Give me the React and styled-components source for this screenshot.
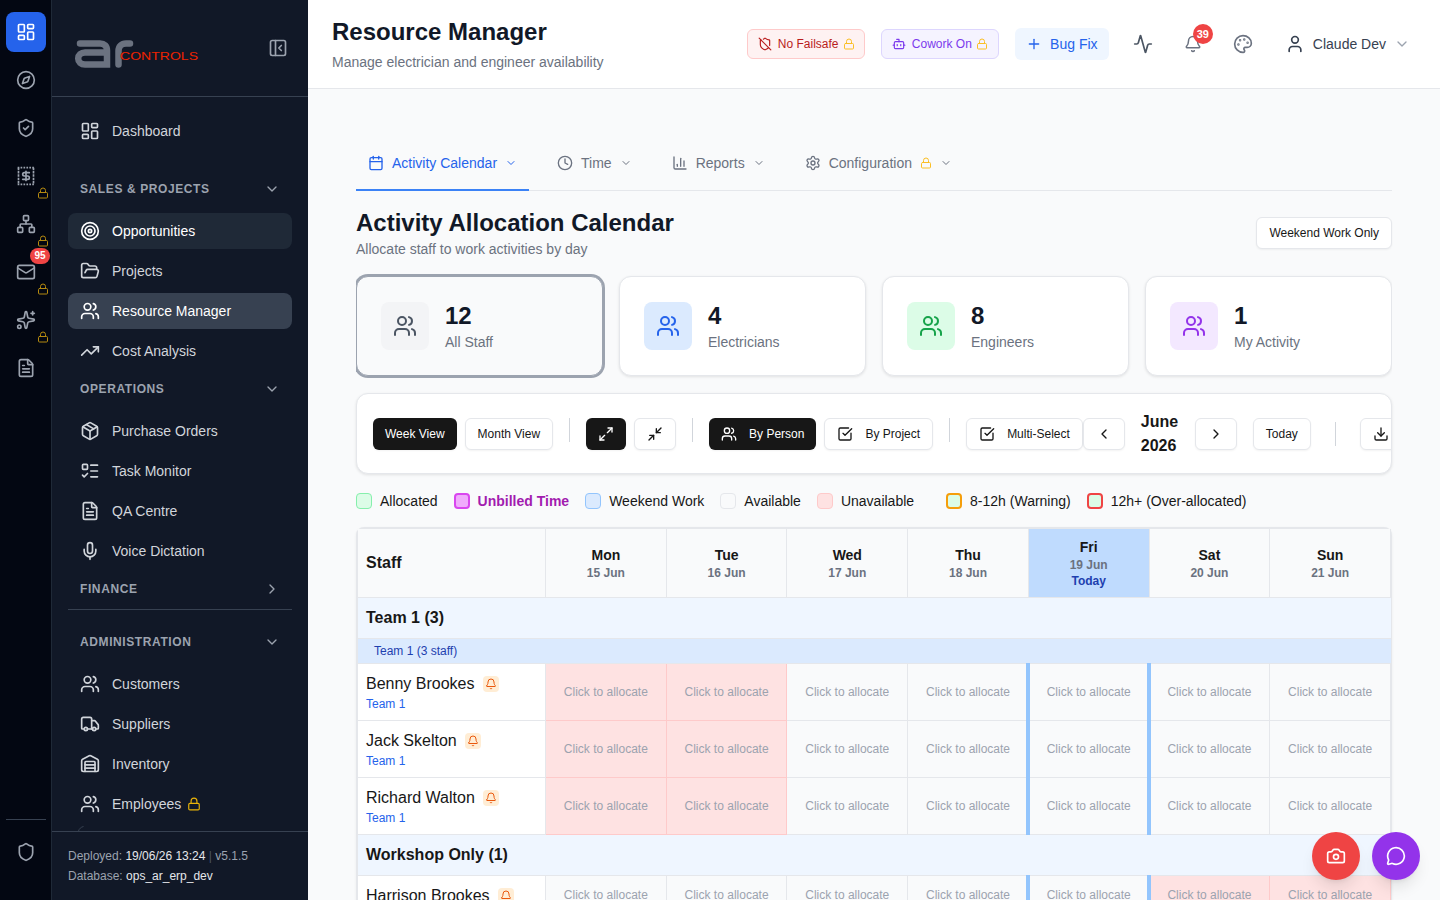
import React from 'react';
import styled, { createGlobalStyle } from 'styled-components';
import {
  LayoutDashboard, Compass, ShieldCheck, Network, Mail, Sparkles, FileText, Shield, Lock, PanelLeftClose,
  ChevronDown, ChevronRight, ChevronLeft, Target, FolderOpen, Users, TrendingUp, Package, ListTodo, Mic, Truck,
  Warehouse, ShieldOff, Bot, Plus, Activity, Bell, Palette, User, Calendar, Clock, ChartColumn, Settings,
  Maximize2, Minimize2, SquareCheckBig, Download, Camera, MessageCircle,
} from 'lucide-react';

const Global = createGlobalStyle`
  * { box-sizing: border-box; }
  html, body { margin: 0; padding: 0; height: 100%; overflow: hidden; }
  body { font-family: "Liberation Sans", Arial, sans-serif; background: #f9fafb; color: #111827; }
`;

const Shell = styled.div`display: flex; width: 100vw; height: 100vh; overflow: hidden;`;

const Rail = styled.nav`
  width: 52px; flex-shrink: 0; background: #030712; border-right: 1px solid #1f2937;
  display: flex; flex-direction: column; align-items: flex-start; padding: 12px 0 28px 6px; gap: 8px;
`;
const RailButton = styled.button`
  position: relative; width: 40px; height: 40px; flex-shrink: 0; border: 0; border-radius: 8px; padding: 0;
  background: ${p => (p.$active ? '#2563eb' : 'transparent')}; color: ${p => (p.$active ? '#fff' : '#9ca3af')};
  display: flex; align-items: center; justify-content: center;
`;
const RailLock = styled.span`
  position: absolute; right: -3px; bottom: -3px; display: flex; color: #b58a10;
`;
const RailBadge = styled.span`
  position: absolute; top: -4px; right: -4px; width: 20px; height: 16px; border-radius: 8px; background: #ef4444;
  color: #fff; font-size: 10px; font-weight: 700; line-height: 16px; text-align: center;
`;
const RailFoot = styled.div`
  margin-top: auto; width: 40px; border-top: 1px solid #374151; padding-top: 12px;
`;

const Sidebar = styled.aside`
  width: 256px; flex-shrink: 0; background: #111827; display: flex; flex-direction: column; height: 100%;
`;
const Brand = styled.div`
  height: 97px; flex-shrink: 0; border-bottom: 1px solid #374151; display: flex; align-items: center;
  justify-content: space-between; padding: 0 20px 0 22px; color: #9ca3af;
`;
const LogoSvg = styled.svg`display: block; margin-top: 12px;`;
const Collapse = styled.span`display: flex; margin-top: 0;`;
const SideNav = styled.div`
  position: relative; flex: 1; min-height: 0; overflow: hidden; padding: 16px 16px 0; display: flex; flex-direction: column;
`;
const NavItem = styled.a`
  height: 36px; flex-shrink: 0; display: flex; align-items: center; gap: 12px; padding: 0 12px; border-radius: 8px;
  font-size: 14px; margin-bottom: 4px;
  color: ${p => (p.$state ? '#fff' : '#d1d5db')};
  background: ${p => (p.$state === 'current' ? '#374151' : p.$state === 'hot' ? '#1f2937' : 'transparent')};
`;
const NavLock = styled.span`display: flex; color: #eab308; margin-left: -6px;`;
const SectionHead = styled.div`
  height: 36px; flex-shrink: 0; display: flex; align-items: center; justify-content: space-between; padding: 0 12px;
  font-size: 12px; font-weight: 700; letter-spacing: 0.6px; text-transform: uppercase; color: #9ca3af;
  margin-top: ${p => p.$top || 0}px; margin-bottom: ${p => p.$bottom ?? 6}px;
`;
const NavRule = styled.div`border-top: 1px solid #374151; flex-shrink: 0; margin-bottom: 14px;`;
const ScrollHint = styled.svg`position: absolute; left: 26px; bottom: 0;`;
const SideFoot = styled.div`
  flex-shrink: 0; height: 69px; border-top: 1px solid #374151; padding: 14px 16px 0; font-size: 12px; line-height: 20px; color: #9ca3af;
`;
const FootValue = styled.span`color: #e5e7eb;`;
const FootDim = styled.span`color: #4b5563;`;

const Main = styled.main`flex: 1; min-width: 0; height: 100%; overflow: hidden; display: flex; flex-direction: column;`;
const TopBar = styled.header`
  height: 89px; flex-shrink: 0; background: #fff; border-bottom: 1px solid #e5e7eb; display: flex; align-items: center;
  justify-content: space-between; padding: 0 22px 0 24px;
`;
const PageTitle = styled.h1`margin: 0 0 4px; font-size: 24px; line-height: 32px; font-weight: 700; color: #111827;`;
const PageSub = styled.p`margin: 0; font-size: 14px; line-height: 20px; color: #6b7280;`;
const TopActions = styled.div`display: flex; align-items: center; gap: 16px;`;
const Chip = styled.button`
  height: 30px; width: 118px; border-radius: 6px; border: 1px solid ${p => p.$line}; background: ${p => p.$bg}; color: ${p => p.$ink};
  display: flex; align-items: center; gap: 6px; padding: 0 0 0 10px; font: 12px "Liberation Sans", Arial, sans-serif; white-space: nowrap;
`;
const ChipLock = styled.span`display: flex; color: #fbbf24; margin-left: -2px;`;
const BugButton = styled.button`
  height: 32px; width: 94px; border: 0; border-radius: 6px; background: #eff6ff; color: #2563eb; display: flex; align-items: center;
  justify-content: center; gap: 8px; font: 14px "Liberation Sans", Arial, sans-serif;
`;
const IconGroup = styled.div`display: flex; gap: 14px;`;
const IconButton = styled.button`
  position: relative; width: 36px; height: 36px; padding: 0; border: 0; background: transparent;
  color: ${p => p.$ink || '#4b5563'};
  display: flex; align-items: center; justify-content: center;
`;
const BellCount = styled.span`
  position: absolute; top: -2px; right: -2px; width: 20px; height: 20px; border-radius: 50%; background: #ef4444; color: #fff;
  font-size: 11px; font-weight: 700; line-height: 20px; text-align: center;
`;
const UserMenu = styled.div`display: flex; align-items: center; gap: 8px; padding: 0 8px; font-size: 14px; color: #374151;`;
const Chevron = styled.span`display: flex; color: #9ca3af;`;

const Content = styled.div`padding: 48px 48px 0; flex: 1; min-height: 0; overflow: hidden;`;
const Tabs = styled.div`display: flex; gap: 16px; border-bottom: 1px solid #e5e7eb; height: 54px;`;
const Tab = styled.div`
  height: 54px; display: flex; align-items: center; gap: 8px; padding: 0 12px; font-size: 14px;
  border-bottom: 2px solid ${p => (p.$on ? '#3b82f6' : 'transparent')}; color: ${p => (p.$on ? '#2563eb' : '#6b7280')};
`;
const TabLock = styled.span`display: flex; color: #fbbf24;`;
const SectionTop = styled.div`display: flex; align-items: center; justify-content: space-between; margin: 16px 0 17px;`;
const SectionTitle = styled.h2`margin: 0; font-size: 24px; line-height: 32px; font-weight: 700; color: #111827;`;
const SectionSub = styled.p`margin: 0; font-size: 14px; line-height: 20px; color: #6b7280;`;
const Button = styled.button`
  height: 32px; flex-shrink: 0; border-radius: 6px; padding: 0 12px; display: flex; align-items: center; gap: 12px;
  font: 12px "Liberation Sans", Arial, sans-serif; white-space: nowrap; box-shadow: 0 1px 2px rgba(0,0,0,.05);
  border: ${p => (p.$dark ? '0' : '1px solid #e5e7eb')};
  background: ${p => (p.$dark ? '#171717' : '#fff')}; color: ${p => (p.$dark ? '#fff' : '#171717')};
`;
const StatGrid = styled.div`
  display: grid; grid-template-columns: repeat(4, 1fr); gap: 16px; overflow-x: clip; margin-bottom: 17px;
`;
const StatCard = styled.div`
  height: 100px; border-radius: 12px; display: flex; align-items: center; gap: 16px; padding: 0 24px;
  border: 1px solid ${p => (p.$picked ? '#9ca3af' : '#e5e7eb')};
  background: ${p => (p.$picked ? '#f9fafb' : '#fff')};
  box-shadow: ${p => (p.$picked ? '0 0 0 2px #9ca3af' : '0 1px 3px rgba(0,0,0,.1)')};
`;
const StatIcon = styled.div`
  width: 48px; height: 48px; border-radius: 8px; background: ${p => p.$bg}; color: ${p => p.$ink};
  display: flex; align-items: center; justify-content: center;
`;
const StatNum = styled.div`font-size: 24px; line-height: 32px; font-weight: 700; color: #111827;`;
const StatLabel = styled.div`font-size: 14px; line-height: 20px; color: #6b7280;`;

const Toolbar = styled.div`
  height: 81px; background: #fff; border: 1px solid #e5e7eb; border-radius: 12px; box-shadow: 0 1px 3px rgba(0,0,0,.1);
  overflow: hidden; display: flex; align-items: center; padding: 0 16px;
`;
const ToolGroup = styled.div`display: flex; align-items: flex-start; gap: 8px; flex-shrink: 0;`;
const ToolRule = styled.span`width: 1px; height: 24px; background: #d1d5db; margin: 0 8px; flex-shrink: 0;`;
const MonthNav = styled.div`display: flex; align-items: center; gap: 16px; flex-shrink: 0;`;
const MonthLabel = styled.div`width: 38px; font-size: 16px; line-height: 24px; font-weight: 700; color: #171717;`;
const EndRule = styled.span`width: 1px; height: 24px; background: #d1d5db; margin: 0 8px; flex-shrink: 0;`;
const Legend = styled.div`display: flex; align-items: center; gap: 16px; margin: 17px 0 16px; height: 20px;`;
const LegendItem = styled.div`
  display: flex; align-items: center; gap: 8px; font-size: 14px; margin-left: ${p => p.$gap || 0}px;
  color: ${p => (p.$strong ? '#a21caf' : '#171717')}; font-weight: ${p => (p.$strong ? 700 : 400)};
`;
const LegendBox = styled.span`
  width: 16px; height: 16px; border-radius: 4px; background: ${p => p.$bg};
  border: ${p => p.$w || 1}px solid ${p => p.$line};
`;

const Sheet = styled.div`
  border: 2px solid #e5e7eb; border-right-width: 1px; border-radius: 8px 8px 0 0; background: #fff; box-shadow: 0 1px 3px rgba(0,0,0,.06);
`;
const GridRow = styled.div`display: grid; grid-template-columns: 188px repeat(7, minmax(0, 1fr)); height: ${p => p.$h}px;`;
const StaffHead = styled.div`
  background: #f9fafb; border-right: 1px solid #e5e7eb; border-bottom: 1px solid #e5e7eb; padding-left: 8px; display: flex; align-items: center;
  font-size: 16px; font-weight: 700; color: #171717;
`;
const DayHead = styled.div`
  background: ${p => (p.$today ? '#bfdbfe' : '#f9fafb')}; border-right: 1px solid #e5e7eb; border-bottom: 1px solid #e5e7eb;
  display: flex; flex-direction: column; align-items: center; justify-content: center;
`;
const DayName = styled.div`font-size: 14px; line-height: 20px; font-weight: 700; color: #171717;`;
const DayDate = styled.div`font-size: 12px; line-height: 16px; font-weight: 700; color: #6b7280;`;
const DayToday = styled.div`font-size: 12px; line-height: 16px; font-weight: 700; color: #1e40af;`;
const GroupRow = styled.div`
  height: 41px; background: #eff6ff; border-bottom: 1px solid #e5e7eb; padding-left: 8px; display: flex; align-items: center;
  font-size: 16px; font-weight: 700; color: #171717;
`;
const SubRow = styled.div`
  height: 25px; background: #dbeafe; border-bottom: 1px solid #e5e7eb; padding-left: 16px; display: flex; align-items: center;
  font-size: 12px; color: #1e40af;
`;
const StaffCell = styled.div`
  background: #fff; border-right: 1px solid #e5e7eb; border-bottom: 1px solid #e5e7eb; padding-left: 8px; display: flex; flex-direction: column; justify-content: center;
`;
const StaffName = styled.div`display: flex; align-items: center; gap: 8px; font-size: 16px; line-height: 24px; color: #171717;`;
const StaffTeam = styled.div`font-size: 12px; line-height: 16px; color: #2563eb;`;
const BellTag = styled.span`
  width: 16px; height: 16px; border-radius: 4px; background: #ffedd5; color: #ea580c; display: flex; align-items: center; justify-content: center;
`;
const DayCell = styled.div`
  position: relative; display: flex; justify-content: center; font-size: 12px; line-height: 16px; color: #9ca3af;
  align-items: ${p => (p.$raised ? 'flex-start' : 'center')};
  padding-top: ${p => (p.$raised ? '11px' : '0')};
  background: ${p => (p.$off ? '#fee2e2' : '#f9fafb')};
  border-right: 1px solid ${p => (p.$off ? '#fecaca' : '#e5e7eb')};
  border-bottom: 1px solid ${p => (p.$off ? '#fecaca' : '#e5e7eb')};
  ${p => p.$today && `
    &::before, &::after { content: ""; position: absolute; top: -1px; bottom: -1px; width: 4px; background: #93c5fd; z-index: 1; }
    &::before { left: -3px; }
    &::after { right: -2px; }
  `}
`;
const Fab = styled.button`
  position: fixed; bottom: 20px; right: ${p => p.$right}px; width: 48px; height: 48px; border-radius: 50%; border: 0; padding: 0; z-index: 5;
  background: ${p => p.$bg}; color: #fff; display: flex; align-items: center; justify-content: center;
  box-shadow: 0 10px 15px -3px rgba(0,0,0,.1), 0 4px 6px -4px rgba(0,0,0,.1);
`;

const ReceiptDollar = ({ size = 20 }) => (
  <svg width={size} height={size} viewBox="0 0 24 24" fill="none" stroke="currentColor" strokeWidth="2" strokeLinecap="round" strokeLinejoin="round">
    <path d="M3 2v20M21 2v20" strokeDasharray="3 1" strokeLinecap="butt" />
    <path d="M2 2h20M2 22h20" strokeDasharray="2 1.500" strokeLinecap="butt" />
    <path d="M16 8h-6a2 2 0 1 0 0 4h4a2 2 0 1 1 0 4H8" />
    <path d="M12 17.500v-11" />
  </svg>
);

const Logo = () => (
  <LogoSvg width="126" height="30" viewBox="0 0 126 30" fill="none">
    <g stroke="#6b7280" strokeWidth="6.5" strokeLinecap="round">
      <path d="M6 4.500h20c4.500 0 7 2.500 7 7V25.500H11c-4 0-6.800-2.600-6.800-6s2.800-6 6.800-6h22" />
      <path d="M44.500 25.500V12c0-4.500 3-7.500 7.500-7.500H56" />
    </g>
    <text x="46" y="20.500" fontFamily="Liberation Sans, Arial, sans-serif" fontSize="11" fill="#ee2200" textLength="78" lengthAdjust="spacingAndGlyphs">CONTROLS</text>
  </LogoSvg>
);

const railItems = [
  { I: LayoutDashboard, active: true }, { I: Compass }, { I: ShieldCheck }, { I: ReceiptDollar, lock: true },
  { I: Network, lock: true }, { I: Mail, lock: true, badge: '95' }, { I: Sparkles, lock: true }, { I: FileText },
];

const Item = ({ icon: I, label, state, lock }) => (
  <NavItem $state={state}>
    <I size={20} />
    {label}
    {lock && <NavLock><Lock size={14} /></NavLock>}
  </NavItem>
);

const Section = ({ label, top, bottom, open = true }) => (
  <SectionHead $top={top} $bottom={bottom}>
    {label}
    {open ? <ChevronDown size={16} /> : <ChevronRight size={16} />}
  </SectionHead>
);

const days = [['Mon', '15 Jun'], ['Tue', '16 Jun'], ['Wed', '17 Jun'], ['Thu', '18 Jun'], ['Fri', '19 Jun', true], ['Sat', '20 Jun'], ['Sun', '21 Jun']];

const StaffRow = ({ name, off, raised }) => (
  <GridRow $h={57}>
    <StaffCell>
      <StaffName>{name}<BellTag><Bell size={12} /></BellTag></StaffName>
      <StaffTeam>Team 1</StaffTeam>
    </StaffCell>
    {days.map((d, i) => (
      <DayCell key={d[0]} $off={off.includes(i)} $today={d[2]} $raised={raised}>Click to allocate</DayCell>
    ))}
  </GridRow>
);

const stats = [
  { n: '12', l: 'All Staff', bg: '#f3f4f6', ink: '#4b5563', picked: true },
  { n: '4', l: 'Electricians', bg: '#dbeafe', ink: '#2563eb' },
  { n: '8', l: 'Engineers', bg: '#dcfce7', ink: '#16a34a' },
  { n: '1', l: 'My Activity', bg: '#f3e8ff', ink: '#9333ea' },
];

const legend = [
  { t: 'Allocated', bg: '#dcfce7', line: '#86efac' },
  { t: 'Unbilled Time', bg: '#f0abfc', line: '#d946ef', w: 2, strong: true },
  { t: 'Weekend Work', bg: '#dbeafe', line: '#93c5fd' },
  { t: 'Available', bg: '#f9fafb', line: '#e5e7eb' },
  { t: 'Unavailable', bg: '#fee2e2', line: '#fecaca' },
  { t: '8-12h (Warning)', bg: '#dcfce7', line: '#f59e0b', w: 2, gap: 16 },
  { t: '12h+ (Over-allocated)', bg: '#dcfce7', line: '#ef4444', w: 2 },
];

export default function App() {
  return (
    <Shell>
      <Global />
      <Rail>
        {railItems.map(({ I, active, lock, badge }, i) => (
          <RailButton key={i} $active={active}>
            <I size={20} />
            {lock && <RailLock><Lock size={12} /></RailLock>}
            {badge && <RailBadge>{badge}</RailBadge>}
          </RailButton>
        ))}
        <RailFoot>
          <RailButton><Shield size={20} /></RailButton>
        </RailFoot>
      </Rail>

      <Sidebar>
        <Brand>
          <Logo />
          <Collapse><PanelLeftClose size={20} /></Collapse>
        </Brand>
        <SideNav>
          <Item icon={LayoutDashboard} label="Dashboard" />
          <Section label="Sales & Projects" top={18} />
          <Item icon={Target} label="Opportunities" state="hot" />
          <Item icon={FolderOpen} label="Projects" />
          <Item icon={Users} label="Resource Manager" state="current" />
          <Item icon={TrendingUp} label="Cost Analysis" />
          <Section label="Operations" top={-2} />
          <Item icon={Package} label="Purchase Orders" />
          <Item icon={ListTodo} label="Task Monitor" />
          <Item icon={FileText} label="QA Centre" />
          <Item icon={Mic} label="Voice Dictation" />
          <Section label="Finance" top={-2} bottom={2} open={false} />
          <NavRule />
          <Section label="Administration" />
          <Item icon={Users} label="Customers" />
          <Item icon={Truck} label="Suppliers" />
          <Item icon={Warehouse} label="Inventory" />
          <Item icon={Users} label="Employees" lock />
          <ScrollHint width="6" height="5" viewBox="0 0 6 5" fill="none">
            <path d="M0.500 5C1 3 3 1 5.500 0.500" stroke="#374151" />
          </ScrollHint>
        </SideNav>
        <SideFoot>
          <div>Deployed: <FootValue>19/06/26 13:24</FootValue> <FootDim>|</FootDim> v5.1.5</div>
          <div>Database: <FootValue>ops_ar_erp_dev</FootValue></div>
        </SideFoot>
      </Sidebar>

      <Main>
        <TopBar>
          <div>
            <PageTitle>Resource Manager</PageTitle>
            <PageSub>Manage electrician and engineer availability</PageSub>
          </div>
          <TopActions>
            <Chip $line="#fecaca" $bg="#fef2f2" $ink="#b91c1c">
              <ShieldOff size={14} />No Failsafe<ChipLock><Lock size={12} /></ChipLock>
            </Chip>
            <Chip $line="#ddd6fe" $bg="#f5f3ff" $ink="#7c3aed">
              <Bot size={14} />Cowork On<ChipLock><Lock size={12} /></ChipLock>
            </Chip>
            <BugButton><Plus size={16} />Bug Fix</BugButton>
            <IconGroup>
              <IconButton><Activity size={20} /></IconButton>
              <IconButton $ink="#6b7280"><Bell size={18} /><BellCount>39</BellCount></IconButton>
              <IconButton $ink="#6b7280"><Palette size={20} /></IconButton>
            </IconGroup>
            <UserMenu>
              <User size={20} />Claude Dev<Chevron><ChevronDown size={16} /></Chevron>
            </UserMenu>
          </TopActions>
        </TopBar>

        <Content>
          <Tabs>
            <Tab $on><Calendar size={16} />Activity Calendar<ChevronDown size={12} /></Tab>
            <Tab><Clock size={16} />Time<ChevronDown size={12} /></Tab>
            <Tab><ChartColumn size={16} />Reports<ChevronDown size={12} /></Tab>
            <Tab><Settings size={16} />Configuration<TabLock><Lock size={12} /></TabLock><ChevronDown size={12} /></Tab>
          </Tabs>

          <SectionTop>
            <div>
              <SectionTitle>Activity Allocation Calendar</SectionTitle>
              <SectionSub>Allocate staff to work activities by day</SectionSub>
            </div>
            <Button>Weekend Work Only</Button>
          </SectionTop>

          <StatGrid>
            {stats.map(s => (
              <StatCard key={s.l} $picked={s.picked}>
                <StatIcon $bg={s.bg} $ink={s.ink}><Users size={24} /></StatIcon>
                <div>
                  <StatNum>{s.n}</StatNum>
                  <StatLabel>{s.l}</StatLabel>
                </div>
              </StatCard>
            ))}
          </StatGrid>

          <Toolbar>
            <ToolGroup>
              <Button $dark>Week View</Button>
              <Button>Month View</Button>
              <ToolRule />
              <Button $dark><Maximize2 size={16} /></Button>
              <Button><Minimize2 size={16} /></Button>
              <ToolRule />
              <Button $dark><Users size={16} />By Person</Button>
              <Button><SquareCheckBig size={16} />By Project</Button>
              <ToolRule />
              <Button><SquareCheckBig size={16} />Multi-Select</Button>
            </ToolGroup>
            <MonthNav>
              <Button><ChevronLeft size={16} /></Button>
              <MonthLabel>June 2026</MonthLabel>
              <Button><ChevronRight size={16} /></Button>
              <Button>Today</Button>
              <EndRule />
              <Button><Download size={16} /></Button>
            </MonthNav>
          </Toolbar>

          <Legend>
            {legend.map(l => (
              <LegendItem key={l.t} $strong={l.strong} $gap={l.gap}>
                <LegendBox $bg={l.bg} $line={l.line} $w={l.w} />
                {l.t}
              </LegendItem>
            ))}
          </Legend>

          <Sheet>
            <GridRow $h={69}>
              <StaffHead>Staff</StaffHead>
              {days.map(d => (
                <DayHead key={d[0]} $today={d[2]}>
                  <DayName>{d[0]}</DayName>
                  <DayDate>{d[1]}</DayDate>
                  {d[2] && <DayToday>Today</DayToday>}
                </DayHead>
              ))}
            </GridRow>
            <GroupRow>Team 1 (3)</GroupRow>
            <SubRow>Team 1 (3 staff)</SubRow>
            <StaffRow name="Benny Brookes" off={[0, 1]} />
            <StaffRow name="Jack Skelton" off={[0, 1]} />
            <StaffRow name="Richard Walton" off={[0, 1]} />
            <GroupRow>Workshop Only (1)</GroupRow>
            <StaffRow name="Harrison Brookes" off={[5, 6]} raised />
          </Sheet>
        </Content>
      </Main>

      <Fab $right={80} $bg="#ef4444"><Camera size={20} /></Fab>
      <Fab $right={20} $bg="#9333ea"><MessageCircle size={20} /></Fab>
    </Shell>
  );
}
